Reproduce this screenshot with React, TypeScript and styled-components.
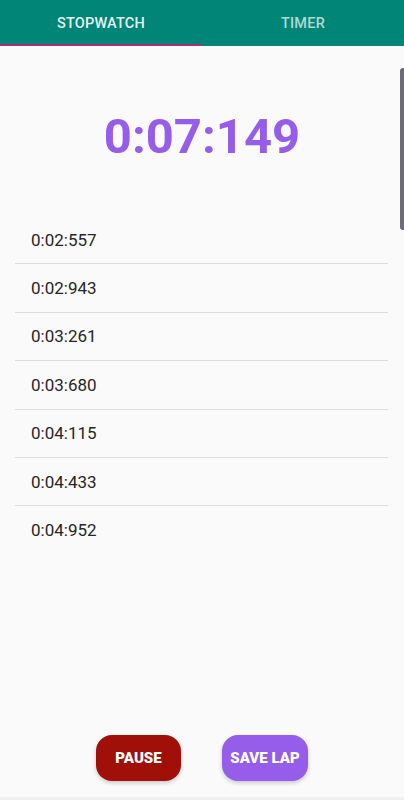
import React, { useState } from "react";
import styled, { createGlobalStyle } from "styled-components";

const primary = "008577";
const accent = "B02C72";
const purple = "955DE9";
const pauseRed = "A00F08";

const GlobalStyle = createGlobalStyle`
    html, body {
        margin: 0;
        padding: 0;
        background: #fafafa;
        font-family: Roboto, "Liberation Sans", sans-serif;
    }
`;

const Screen = styled.div`
    position: relative;
    display: flex;
    flex-direction: column;
    width: 404px;
    height: 800px;
    background: #fafafa;
    overflow: hidden;
`;

const TabBar = styled.div`
    display: flex;
    height: 46px;
    background: ${`#${primary}`};
    flex-shrink: 0;
`;

const Tab = styled.div<{ active: boolean }>`
    flex: 1;
    display: flex;
    align-items: center;
    justify-content: center;
    font-size: 14.5px;
    font-weight: 500;
    letter-spacing: 0.2px;
    color: ${(p) => (p.active ? "rgba(255,255,255,0.92)" : "rgba(255,255,255,0.7)")};
    border-bottom: 2px solid ${(p) => (p.active ? `#${accent}` : "transparent")};
    box-sizing: border-box;
    padding-top: 2px;
`;

const Elapsed = styled.div`
    margin-top: 61px;
    height: 60px;
    line-height: 60px;
    text-align: center;
    font-size: 49px;
    font-weight: 700;
    color: ${`#${purple}`};
`;

const LapList = styled.div`
    flex: 1;
    margin: 49px 16px 0 15px;
    display: flex;
    flex-direction: column;
`;

const LapRow = styled.div<{ last: boolean }>`
    height: 48.4px;
    box-sizing: border-box;
    display: flex;
    align-items: center;
    padding-left: 16px;
    font-size: 17px;
    color: #262626;
    border-bottom: 1px solid ${(p) => (p.last ? "transparent" : "#dcdcdc")};
`;

const Controls = styled.div`
    display: flex;
    justify-content: center;
    gap: 41px;
    padding-bottom: 16px;
`;

const ActionButton = styled.button<{ color: string; wide?: boolean }>`
    height: 46px;
    width: ${(p) => (p.wide ? "86px" : "85px")};
    padding: 0;
    border: none;
    border-radius: 16px;
    background: ${(p) => p.color};
    color: #ffffff;
    font-family: Roboto, "Liberation Sans", sans-serif;
    font-size: 15px;
    font-weight: 900;
    box-shadow: 0 2px 4px rgba(0, 0, 0, 0.2);
`;

const NavEdge = styled.div`
    height: 3px;
    background: #f0f0f0;
`;

const ScrollThumb = styled.div`
    position: absolute;
    right: 0;
    top: 68px;
    width: 4px;
    height: 162px;
    border-radius: 3px 0 0 3px;
    background: #6c6c76;
`;

const laps = [
    "0:02:557",
    "0:02:943",
    "0:03:261",
    "0:03:680",
    "0:04:115",
    "0:04:433",
    "0:04:952",
];

function App() {
    const [tab, setTab] = useState("stopwatch");

    return (
        <Screen>
            <GlobalStyle />
            <TabBar>
                <Tab active={tab === "stopwatch"} onClick={() => setTab("stopwatch")}>
                    STOPWATCH
                </Tab>
                <Tab active={tab === "timer"} onClick={() => setTab("timer")}>
                    TIMER
                </Tab>
            </TabBar>
            <Elapsed>0:07:149</Elapsed>
            <LapList>
                {laps.map((lap, i) => (
                    <LapRow key={lap} last={i === laps.length - 1}>
                        {lap}
                    </LapRow>
                ))}
            </LapList>
            <Controls>
                <ActionButton color={`#${pauseRed}`}>PAUSE</ActionButton>
                <ActionButton color={`#${purple}`} wide>
                    SAVE LAP
                </ActionButton>
            </Controls>
            <NavEdge />
            <ScrollThumb />
        </Screen>
    );
}

export default App;
